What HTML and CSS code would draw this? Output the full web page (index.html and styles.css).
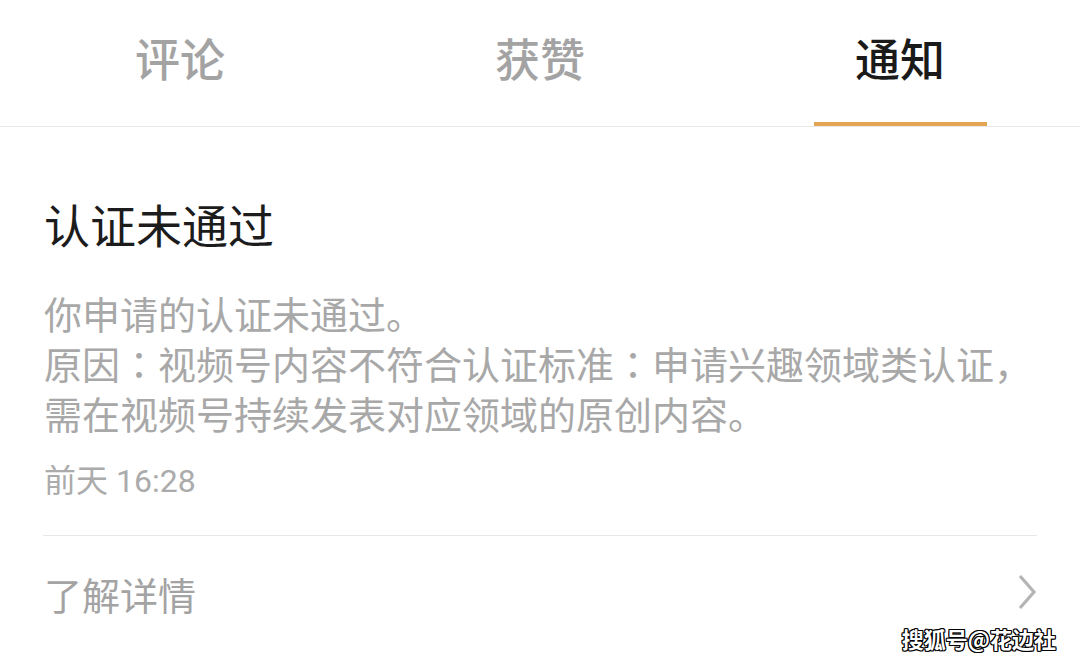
FILE: index.html
```html
<!DOCTYPE html>
<html lang="zh-CN">
<head>
<meta charset="utf-8">
<link rel="stylesheet" href="styles.css">
</head>
<body>
<div class="page">
  <nav class="tabs">
    <div class="tab"><span class="tab-label">评论</span><span class="tab-bar"></span></div>
    <div class="tab"><span class="tab-label">获赞</span><span class="tab-bar"></span></div>
    <div class="tab active"><span class="tab-label">通知</span><span class="tab-bar"></span></div>
  </nav>
  <main class="content">
    <h1 class="title">认证未通过</h1>
    <p class="body">你申请的认证未通过。<br>原因<span class="colon" lang="ja">：</span>视频号内容不符合认证标准<span class="colon" lang="ja">：</span>申请兴趣领域类认证，<br>需在视频号持续发表对应领域的原创内容。</p>
    <div class="time">前天 16:28</div>
    <div class="divider"></div>
    <div class="more">
      <span class="more-label">了解详情</span>
      <svg class="chevron" width="20" height="38" viewBox="0 0 20 38"><path d="M3 3 L17 19 L3 35" fill="none" stroke="#b4b4b4" stroke-width="3.2"/></svg>
    </div>
  </main>
  <div class="watermark">搜狐号@花边社</div>
</div>
</body>
</html>
```

FILE: styles.css
```css
* { box-sizing: border-box; margin: 0; padding: 0; }
html, body { width: 1080px; height: 663px; overflow: hidden; background: #fff; }
body { font-family: "Noto Sans CJK SC", "Noto Sans", sans-serif; }
.page { position: relative; width: 1080px; height: 663px; }
.tabs { display: flex; height: 127px; border-bottom: 1px solid #e8e8e8; }
.tab { flex: 1; display: flex; flex-direction: column; align-items: center; }
.tab-label { display: block; padding-top: 28px; line-height: 60px; font-size: 45px; font-weight: 500; color: #a3a3a3; }
.tab-bar { display: block; margin-top: auto; width: 173px; height: 4px; }
.tab.active .tab-label { color: #1a1a1a; }
.tab.active .tab-bar { background: #e3a552; }
.content { padding: 66px 43px 0 44px; }
.title { font-size: 46px; font-weight: 400; line-height: 60px; color: #1c1c1c; }
.body { margin-top: 35px; font-size: 38px; line-height: 50px; color: #a8a8a8; }
.colon { font-family: "Noto Sans CJK JP", "Noto Sans CJK TC", sans-serif; }
.time { margin-top: 23px; font-family: "Roboto", "Noto Sans CJK SC", sans-serif; font-size: 32px; line-height: 40px; color: #ababab; }
.divider { margin-top: 34px; height: 1px; background: #e8e8e8; margin-left: -1px; }
.more { display: flex; align-items: center; justify-content: space-between; padding-top: 33px; height: 83px; }
.more-label { font-size: 38px; line-height: 50px; color: #a3a3a3; }
.chevron { display: block; margin-top: -4px; }
.watermark { position: absolute; right: 24px; bottom: 10px; font-size: 22px; font-weight: 700; color: #fff; line-height: 30px;
  text-shadow: 1px 1px 0 #000, -1px -1px 0 #000, 1px -1px 0 #000, -1px 1px 0 #000, 0 1px 0 #000, 0 -1px 0 #000, 1px 0 0 #000, -1px 0 0 #000; }
```
